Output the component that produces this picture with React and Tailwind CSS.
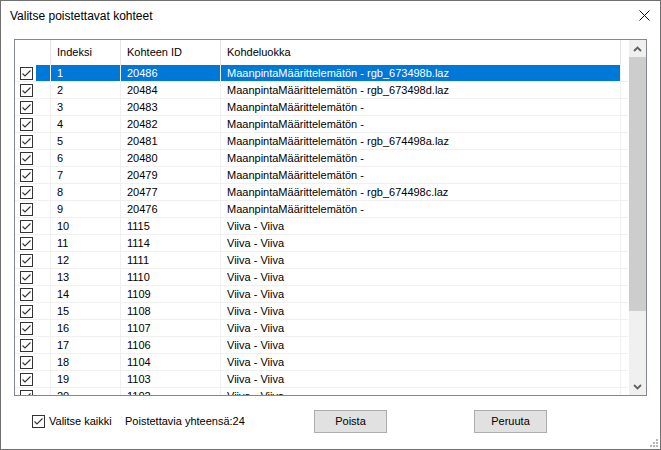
import React from "react";

const rows = [
  ["1", "20486", "MaanpintaMäärittelemätön - rgb_673498b.laz"],
  ["2", "20484", "MaanpintaMäärittelemätön - rgb_673498d.laz"],
  ["3", "20483", "MaanpintaMäärittelemätön -"],
  ["4", "20482", "MaanpintaMäärittelemätön -"],
  ["5", "20481", "MaanpintaMäärittelemätön - rgb_674498a.laz"],
  ["6", "20480", "MaanpintaMäärittelemätön -"],
  ["7", "20479", "MaanpintaMäärittelemätön -"],
  ["8", "20477", "MaanpintaMäärittelemätön - rgb_674498c.laz"],
  ["9", "20476", "MaanpintaMäärittelemätön -"],
  ["10", "1115", "Viiva - Viiva"],
  ["11", "1114", "Viiva - Viiva"],
  ["12", "1111", "Viiva - Viiva"],
  ["13", "1110", "Viiva - Viiva"],
  ["14", "1109", "Viiva - Viiva"],
  ["15", "1108", "Viiva - Viiva"],
  ["16", "1107", "Viiva - Viiva"],
  ["17", "1106", "Viiva - Viiva"],
  ["18", "1104", "Viiva - Viiva"],
  ["19", "1103", "Viiva - Viiva"],
  ["20", "1102", "Viiva - Viiva"],
];

function Check() {
  return (
    <div className="w-[13px] h-[13px] border border-[#333333] bg-white shrink-0 flex items-center justify-center">
      <svg width="11" height="11" viewBox="0 0 11 11">
        <path d="M1.5 5.5 L4 8 L9.5 2.5" fill="none" stroke="#333333" strokeWidth="1.1" />
      </svg>
    </div>
  );
}

function Row({ r, sel }) {
  const cell = sel ? "bg-[#0078d7] text-white" : "bg-white text-black";
  return (
    <div className="flex h-[17px] shrink-0 border-b border-[#f0f0f0] w-[613px]">
      <div className="w-[36px] flex h-[16px] border-r border-[#f0f0f0]">
        <div className="w-[21px] flex items-center pl-[5px]">
          <Check />
        </div>
        <div className={`w-[14px] ${sel ? "bg-[#0078d7]" : ""}`} />
      </div>
      <div className={`w-[70px] h-[16px] border-r border-[#f0f0f0] pl-[6px] flex items-center ${cell}`}>{r[0]}</div>
      <div className={`w-[100px] h-[16px] border-r border-[#f0f0f0] pl-[6px] flex items-center ${cell}`}>{r[1]}</div>
      <div className={`w-[400px] h-[16px] border-r border-[#f0f0f0] pl-[6px] flex items-center whitespace-nowrap ${cell}`}>{r[2]}</div>
    </div>
  );
}

export default function App() {
  return (
    <div className="w-[661px] h-[450px] bg-white border border-[#707070] flex flex-col relative text-black font-['Liberation_Sans',Arial,sans-serif] text-[11px] overflow-hidden">
      {/* title bar */}
      <div className="h-[38px] shrink-0 flex items-start justify-between">
        <div className="pl-[9px] pt-[8px] text-[12px] leading-[15px]">Valitse poistettavat kohteet</div>
        <div className="pt-[9px] pr-[10px]">
          <svg width="11" height="11" viewBox="0 0 11 11">
            <path d="M0.5 0.5 L10.5 10.5 M10.5 0.5 L0.5 10.5" stroke="#111" strokeWidth="1" fill="none" />
          </svg>
        </div>
      </div>

      {/* grid */}
      <div className="ml-[13px] w-[633px] h-[357px] shrink-0 border border-[#828790] flex">
        <div className="w-[614px] h-[355px] overflow-hidden flex flex-col">
          <div className="flex h-[25px] shrink-0">
            <div className="w-[36px] border-r border-[#e5e5e5]" />
            <div className="w-[70px] border-r border-[#e5e5e5] pl-[6px] flex items-center">Indeksi</div>
            <div className="w-[100px] border-r border-[#e5e5e5] pl-[6px] flex items-center">Kohteen ID</div>
            <div className="w-[400px] border-r border-[#e5e5e5] pl-[6px] flex items-center">Kohdeluokka</div>
          </div>
          {rows.map((r, i) => (
            <Row key={i} r={r} sel={i === 0} />
          ))}
        </div>
        <div className="w-[17px] h-[355px] bg-[#f0f0f0] flex flex-col">
          <div className="h-[17px] flex items-center justify-center shrink-0">
            <svg width="9" height="6" viewBox="0 0 9 6">
              <path d="M1 5 L4.5 1.5 L8 5" fill="none" stroke="#606060" strokeWidth="1.8" />
            </svg>
          </div>
          <div className="h-[254px] bg-[#cdcdcd] shrink-0" />
          <div className="flex-1" />
          <div className="h-[17px] flex items-center justify-center shrink-0">
            <svg width="9" height="6" viewBox="0 0 9 6">
              <path d="M1 1 L4.5 4.5 L8 1" fill="none" stroke="#606060" strokeWidth="1.8" />
            </svg>
          </div>
        </div>
      </div>

      {/* bottom */}
      <div className="mt-[14px] h-[23px] flex items-center pl-[31px]">
        <div className="w-[93px] flex items-center gap-[4px]">
          <Check />
          <span>Valitse kaikki</span>
        </div>
        <div className="w-[189px]">Poistettavia yhteensä:24</div>
        <button className="w-[73px] h-[23px] bg-[#e1e1e1] border border-[#adadad] flex items-center justify-center">Poista</button>
        <div className="w-[87px]" />
        <button className="w-[73px] h-[23px] bg-[#e1e1e1] border border-[#adadad] flex items-center justify-center">Peruuta</button>
      </div>

      {/* resize grip */}
      <svg className="absolute right-[2px] bottom-[2px]" width="9" height="9" viewBox="0 0 9 9">
        <rect x="7" y="1" width="2" height="2" fill="#b8b8b8" />
        <rect x="4" y="4" width="2" height="2" fill="#b8b8b8" />
        <rect x="7" y="4" width="2" height="2" fill="#b8b8b8" />
        <rect x="1" y="7" width="2" height="2" fill="#b8b8b8" />
        <rect x="4" y="7" width="2" height="2" fill="#b8b8b8" />
        <rect x="7" y="7" width="2" height="2" fill="#b8b8b8" />
      </svg>
    </div>
  );
}
